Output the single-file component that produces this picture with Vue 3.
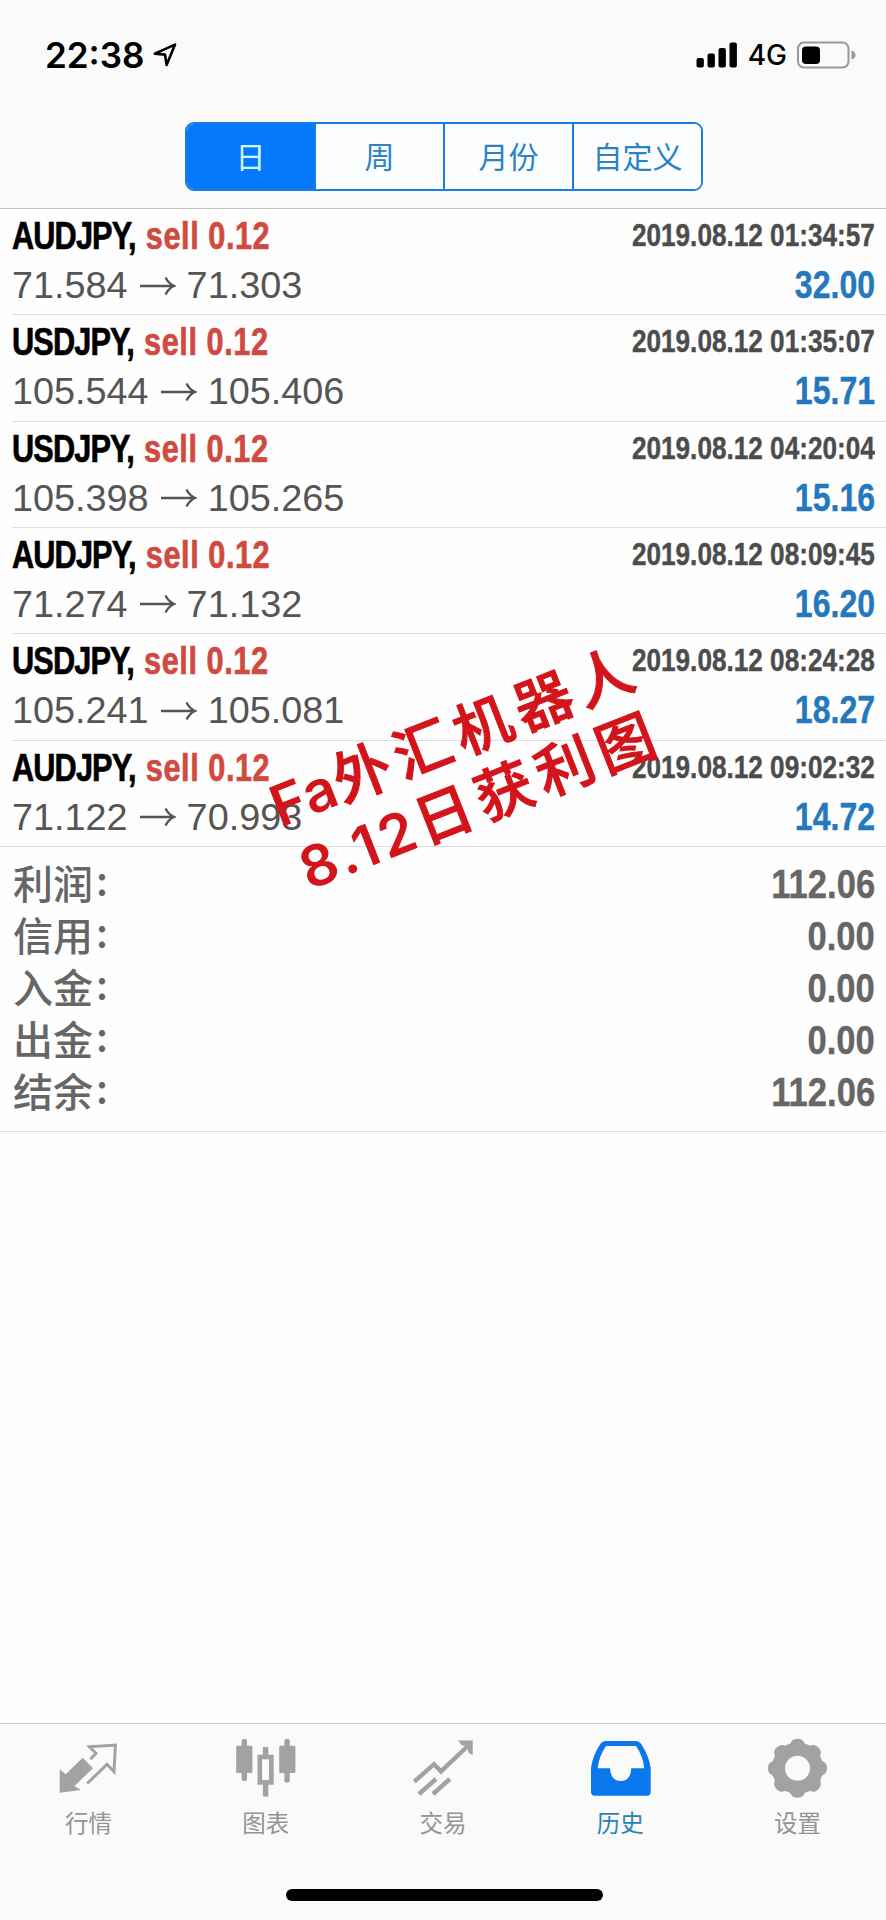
<template>
  <div class="screen">
    <header class="top">
      <div class="status-bar">
        <div class="status-left">
          <span class="clock">22:38</span>
          <svg class="location" width="24" height="24" viewBox="0 0 24 24">
            <path d="M1.800 10.600 22 1.600 13.600 22 12 11.600Z" />
          </svg>
        </div>
        <div class="status-right">
          <svg class="signal" width="42" height="26" viewBox="0 0 42 26">
            <rect x="0.5" y="16" width="7.4" height="9.5" rx="2" />
            <rect x="11.5" y="11.5" width="7.4" height="14" rx="2" />
            <rect x="22.5" y="6" width="7.4" height="19.5" rx="2" />
            <rect x="33.5" y="0.5" width="7.4" height="25" rx="2" />
          </svg>
          <span class="network">4G</span>
          <svg class="battery" width="60" height="28" viewBox="0 0 60 28">
            <rect class="battery-shell" x="1" y="1.5" width="50.5" height="25" rx="6" />
            <rect x="5" y="5.5" width="18" height="17.5" rx="4" />
            <path class="battery-nub" d="M54.500 9.500Q58.500 11 58.500 14T54.500 18.500Z" />
          </svg>
        </div>
      </div>
      <div class="segments">
        <button
          v-for="period in periods"
          :key="period"
          class="segment"
          :class="{ active: period === activePeriod }"
          @click="activePeriod = period"
        >
          {{ period }}
        </button>
      </div>
    </header>

    <main class="history">
      <ul class="deals">
        <li v-for="deal in deals" :key="deal.time" class="deal">
          <div class="deal-line">
            <span class="deal-title">
              <span class="symbol">{{ deal.symbol }},</span>
              <span class="side">sell 0.12</span>
            </span>
            <span class="time">{{ deal.time }}</span>
          </div>
          <div class="deal-line prices-line">
            <span class="prices">
              {{ deal.open }}
              <svg class="arrow" width="37" height="20" viewBox="0 0 37 20">
                <path d="M1 10H35M26.500 1.500Q29.500 7.500 35 10Q29.500 12.500 26.500 18.500" />
              </svg>
              {{ deal.close }}
            </span>
            <span class="profit">{{ deal.profit }}</span>
          </div>
        </li>
      </ul>

      <div class="summary">
        <div v-for="row in summary" :key="row.label" class="summary-row">
          <span class="summary-label">{{ row.label }}<span class="colon">:</span></span>
          <span class="summary-value">{{ row.value }}</span>
        </div>
      </div>

      <div class="stamp">
        <div><span class="latin">Fa</span>外汇机器人</div>
        <div><span class="latin digits">8.12</span>日获利图</div>
      </div>
    </main>

    <nav class="tab-bar">
      <div class="tabs">
        <a class="tab">
          <svg class="tab-icon" viewBox="0 0 64 64">
            <path class="fill" d="M2.700 33.300 8.700 38.300 25.700 21.700 36 32.300 17.400 50 24 54 2.700 56.700Z" />
            <path
              class="line thin"
              d="M33.400 23.300 39 17.300 32.400 10.700 58.400 9 57 35.700 50 28.300 30.200 47.500"
            />
          </svg>
          <span>行情</span>
        </a>
        <a class="tab">
          <svg class="tab-icon" viewBox="0 0 64 64">
            <rect class="fill" x="2.200" y="9.700" width="16.200" height="27.200" rx="1" />
            <rect class="fill" x="7.600" y="3" width="5.400" height="42" rx="2" />
            <rect class="line thick" x="25.800" y="21" width="11.600" height="25.400" />
            <path class="line wick" d="M31.600 11V20M31.600 47V60.500" />
            <rect class="fill" x="45.200" y="9.700" width="16.200" height="27.200" rx="1" />
            <rect class="fill" x="50.400" y="3" width="5.400" height="43.500" rx="2" />
          </svg>
          <span>图表</span>
        </a>
        <a class="tab">
          <svg class="tab-icon" viewBox="0 0 64 64">
            <path
              class="line trend"
              d="M3.300 45.700 23 28.200 30 35.300 57.300 9.500M8 58 25 43M22 58 38.800 43"
            />
            <path class="fill" d="M47 4.500H61.700V19.500L57 16V9.500H51Z" />
          </svg>
          <span>交易</span>
        </a>
        <a class="tab active">
          <svg class="tab-icon" viewBox="0 0 64 64">
            <path
              class="fill"
              fill-rule="evenodd"
              d="M3 32Q4.500 20 12 8.500Q14 5 18 5H47.500Q51.500 5 53.500 8.500Q61 20 62.700 32V56Q62.700 59.700 59 59.700H6.700Q3 59.700 3 56ZM18 10Q11 20 9.700 32.300H22Q22.700 45 32.700 45T43.300 32.300H56.300Q55 20 48 10Z"
            />
          </svg>
          <span>历史</span>
        </a>
        <a class="tab">
          <svg class="tab-icon" viewBox="0 0 64 64">
            <circle class="line ring" cx="32.500" cy="32.300" r="19" />
            <path
              v-for="n in 8"
              :key="n"
              class="fill"
              d="M23 9Q25.500 8 26.500 5.500Q28 2.800 32.500 2.800T38.500 5.500Q39.500 8 42 9Z"
              :transform="`rotate(${n * 45} 32.5 32.3)`"
            />
          </svg>
          <span>设置</span>
        </a>
      </div>
      <div class="home-indicator"></div>
    </nav>
  </div>
</template>

<script setup>
import { ref } from 'vue'

const periods = ['日', '周', '月份', '自定义']
const activePeriod = ref('日')

const deals = [
  { symbol: 'AUDJPY', time: '2019.08.12 01:34:57', open: '71.584', close: '71.303', profit: '32.00' },
  { symbol: 'USDJPY', time: '2019.08.12 01:35:07', open: '105.544', close: '105.406', profit: '15.71' },
  { symbol: 'USDJPY', time: '2019.08.12 04:20:04', open: '105.398', close: '105.265', profit: '15.16' },
  { symbol: 'AUDJPY', time: '2019.08.12 08:09:45', open: '71.274', close: '71.132', profit: '16.20' },
  { symbol: 'USDJPY', time: '2019.08.12 08:24:28', open: '105.241', close: '105.081', profit: '18.27' },
  { symbol: 'AUDJPY', time: '2019.08.12 09:02:32', open: '71.122', close: '70.993', profit: '14.72' },
]

const summary = [
  { label: '利润', value: '112.06' },
  { label: '信用', value: '0.00' },
  { label: '入金', value: '0.00' },
  { label: '出金', value: '0.00' },
  { label: '结余', value: '112.06' },
]
</script>

<style>
body {
  margin: 0;
  background: #fefefe;
}
</style>

<style scoped>
.screen {
  display: flex;
  flex-direction: column;
  width: 886px;
  height: 1920px;
  overflow: hidden;
  background: #fefefe;
  font-family: 'Liberation Sans', 'Noto Sans CJK SC', sans-serif;
}

.top {
  box-sizing: border-box;
  height: 209px;
  flex-shrink: 0;
  background: #fafafa;
  border-bottom: 1px solid #c4c4c4;
}

.status-bar {
  display: flex;
  justify-content: space-between;
  align-items: center;
  height: 122px;
  box-sizing: border-box;
  padding: 0 29px 13px 45px;
}

.status-left,
.status-right {
  display: flex;
  align-items: center;
}

.clock {
  font-family: Inter, sans-serif;
  font-size: 35px;
  font-weight: 600;
  color: #000;
}

.location {
  margin-left: 9px;
  fill: none;
  stroke: #000;
  stroke-width: 2.6;
  stroke-linejoin: round;
}

.network {
  margin: 1px 10px 0 10px;
  font-family: Inter, sans-serif;
  font-size: 28px;
  font-weight: 500;
}

.battery-shell {
  fill: none;
  stroke: #999;
  stroke-width: 2;
}

.battery-nub {
  fill: #999;
}

.segments {
  display: flex;
  box-sizing: border-box;
  width: 518px;
  height: 69px;
  margin: 0 0 0 185px;
  border: 2px solid #1a7fdc;
  border-radius: 9px;
  overflow: hidden;
}

.segment {
  flex: 1;
  padding: 0 0 4px;
  border: none;
  border-left: 2px solid #1a7fdc;
  background: #fbfdfe;
  color: #2a83c6;
  font-family: 'Noto Sans CJK SC', sans-serif;
  font-size: 30px;
}

.segment:first-child {
  border-left: none;
}

.segment.active {
  background: #0579fb;
  color: #d4f6ff;
}

.history {
  position: relative;
  flex: 1;
}

.deals {
  list-style: none;
  margin: 0;
  padding: 0;
}

.deal {
  box-sizing: border-box;
  height: 106.33px;
  margin-left: 12px;
  padding: 5px 11px 0 0;
  border-bottom: 1px solid #dcdcdc;
}

.deal:last-child {
  margin-left: 0;
  padding-left: 12px;
}

.deal-line {
  display: flex;
  justify-content: space-between;
  align-items: center;
  height: 44px;
  white-space: nowrap;
}

.prices-line {
  height: 55px;
}

/* bold figures and tickers are set condensed */
.deal-title,
.time,
.profit,
.summary-value {
  font-weight: 700;
  transform: scaleX(0.844);
  transform-origin: right center;
  -webkit-text-stroke: 0.4px currentColor;
}

.deal-title {
  display: flex;
  gap: 13px;
  font-size: 39px;
  transform: scaleX(0.787);
  transform-origin: left center;
  -webkit-text-stroke-width: 0.7px;
}

.symbol {
  color: #000;
  letter-spacing: -1.1px;
}

.side {
  color: #d04a41;
  letter-spacing: 0.7px;
}

.time {
  font-size: 31px;
  color: #4c4c4c;
}

.prices {
  display: flex;
  align-items: center;
  gap: 11px;
  font-size: 37.8px;
  color: #555;
}

.arrow {
  fill: none;
  stroke: #555;
  stroke-width: 2.4;
}

.profit {
  font-size: 38px;
  color: #2478bd;
}

.summary {
  box-sizing: border-box;
  height: 285px;
  padding: 12px 11px 0 13px;
  border-bottom: 1px solid #dcdcdc;
}

.summary-row {
  display: flex;
  justify-content: space-between;
  align-items: center;
  height: 52px;
  color: #666;
}

.summary-label {
  display: flex;
  align-items: center;
  margin-top: -6px;
  font-family: 'Noto Sans CJK SC', sans-serif;
  font-size: 40px;
  font-weight: 500;
  line-height: 52px;
}

.colon {
  margin-left: 3px;
  transform: translateY(-4px);
}

.summary-value {
  font-size: 41px;
}

.stamp {
  position: absolute;
  left: 467px;
  top: 558px;
  transform: translate(-50%, -50%) rotate(-21.5deg);
  font-family: 'Noto Sans CJK SC', sans-serif;
  font-size: 58px;
  font-weight: 500;
  line-height: 65px;
  letter-spacing: 7px;
  text-align: center;
  white-space: nowrap;
  color: #d3141b;
  -webkit-text-stroke: 1px #d3141b;
}

.latin {
  font-family: Inter, sans-serif;
  font-size: 57px;
  font-weight: 600;
  letter-spacing: 1px;
  -webkit-text-stroke-width: 0;
}

.digits {
  letter-spacing: 4px;
}

.tab-bar {
  display: flex;
  flex-direction: column;
  align-items: center;
  flex-shrink: 0;
  box-sizing: border-box;
  height: 197px;
  border-top: 1px solid #c6c6c6;
  background: #fafafa;
}

.tabs {
  display: flex;
  width: 100%;
  padding-top: 12px;
}

.tab {
  display: flex;
  flex: 1;
  flex-direction: column;
  align-items: center;
  color: #949494;
  font-family: 'Noto Sans CJK SC', sans-serif;
  font-size: 23.5px;
  line-height: 30px;
}

.tab span {
  margin-top: 7px;
}

.tab.active {
  color: #2a83b8;
}

.tab-icon {
  width: 64px;
  height: 64px;
  color: #a2a2a2;
}

.tab.active .tab-icon {
  color: #0a78ec;
}

.fill {
  fill: currentColor;
}

.line {
  fill: none;
  stroke: currentColor;
}

.thin {
  stroke-width: 3;
}

.thick {
  stroke-width: 4.6;
}

.wick {
  stroke-width: 5.4;
}

.trend {
  stroke-width: 4.4;
}

.ring {
  stroke-width: 13;
}

.home-indicator {
  width: 317px;
  height: 12px;
  margin: 52px 0 0 2px;
  border-radius: 6px;
  background: #000;
}
</style>
